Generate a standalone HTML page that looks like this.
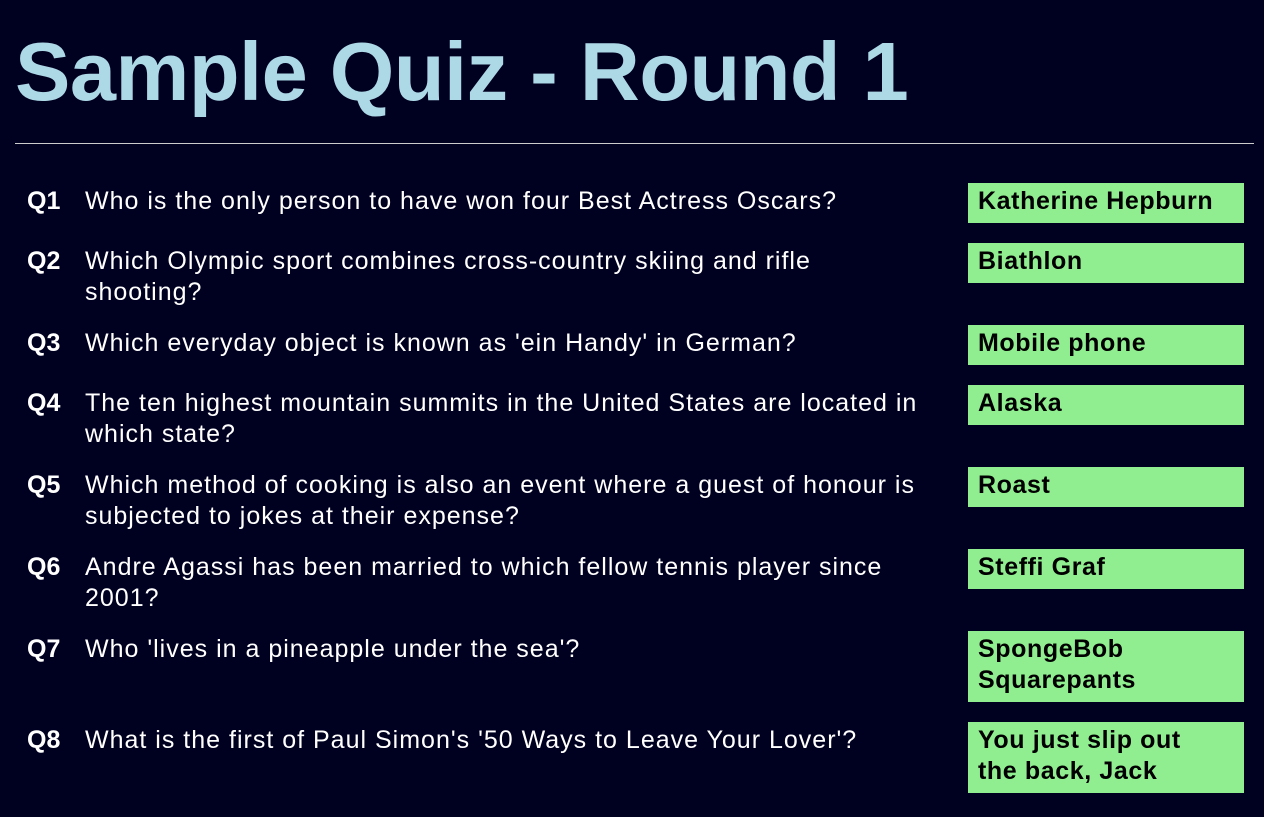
<!DOCTYPE html>
<html><head><meta charset="utf-8"><style>
html,body{margin:0;padding:0;background:#000020;width:1264px;height:817px;overflow:hidden;font-family:"Liberation Sans",sans-serif;}
h1{position:absolute;left:15px;top:22px;margin:0;font-size:83px;line-height:100px;font-weight:bold;color:#add8e6;letter-spacing:-0.5px;}
hr{position:absolute;left:15px;top:143px;width:1239px;margin:0;border:0;border-top:1px solid #ccc;}
.rows{position:absolute;left:0;top:183px;width:1264px;}
.row{display:flex;margin-bottom:20px;}
.q{width:58px;padding-left:27px;color:#fff;font-weight:bold;font-size:25px;line-height:31px;padding-top:3px;margin-bottom:-3px;}
.t{width:860px;color:#fff;font-size:25px;letter-spacing:1px;line-height:31px;padding-top:3px;margin-bottom:-3px;}
.a{margin-left:23px;width:256px;background:#90ee90;color:#000;font-weight:bold;font-size:25px;letter-spacing:0.6px;line-height:31px;padding:3px 10px 6px 10px;align-self:flex-start;}
</style></head><body>
<h1>Sample Quiz - Round 1</h1>
<hr>
<div class="rows">
<div class="row"><div class="q">Q1</div><div class="t">Who is the only person to have won four Best Actress Oscars?</div><div class="a">Katherine Hepburn</div></div>
<div class="row"><div class="q">Q2</div><div class="t">Which Olympic sport combines cross-country skiing and rifle<br>shooting?</div><div class="a">Biathlon</div></div>
<div class="row"><div class="q">Q3</div><div class="t">Which everyday object is known as 'ein Handy' in German?</div><div class="a">Mobile phone</div></div>
<div class="row"><div class="q">Q4</div><div class="t">The ten highest mountain summits in the United States are located in<br>which state?</div><div class="a">Alaska</div></div>
<div class="row"><div class="q">Q5</div><div class="t">Which method of cooking is also an event where a guest of honour is<br>subjected to jokes at their expense?</div><div class="a">Roast</div></div>
<div class="row"><div class="q">Q6</div><div class="t">Andre Agassi has been married to which fellow tennis player since<br>2001?</div><div class="a">Steffi Graf</div></div>
<div class="row"><div class="q">Q7</div><div class="t">Who 'lives in a pineapple under the sea'?</div><div class="a">SpongeBob<br>Squarepants</div></div>
<div class="row"><div class="q">Q8</div><div class="t">What is the first of Paul Simon's '50 Ways to Leave Your Lover'?</div><div class="a">You just slip out<br>the back, Jack</div></div>
</div>
</body></html>
